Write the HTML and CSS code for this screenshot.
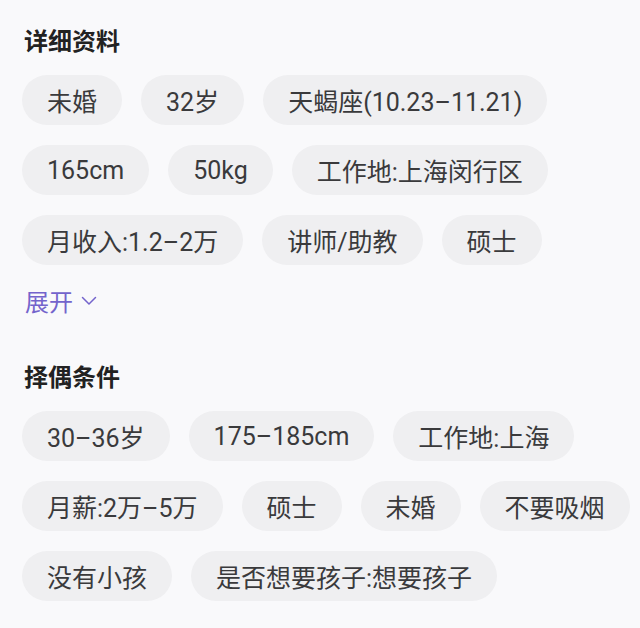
FILE: index.html
```html
<!DOCTYPE html>
<html lang="zh-CN">
<head>
  <meta charset="UTF-8" />
  <meta name="viewport" content="width=device-width, initial-scale=1" />
  <title>详细资料</title>
  <link rel="stylesheet" href="styles.css">
</head>
<body>

  <div class="page">
    <!-- 基本信息 -->
    <div class="section">
      <h2 class="section-title">详细资料</h2>
      <div class="tags">
        <span class="tag">未婚</span>
        <span class="tag">32岁</span>
        <span class="tag">天蝎座(10.23–11.21)</span>
        <span class="tag">165cm</span>
        <span class="tag">50kg</span>
        <span class="tag">工作地:上海闵行区</span>
        <span class="tag">月收入:1.2–2万</span>
        <span class="tag">讲师/助教</span>
        <span class="tag">硕士</span>
      </div>
      <div class="expand">
        展开
        <svg class="chevron" width="16" height="10" viewBox="0 0 16 10">
          <path d="M1.5 1.5 L8 8 L14.5 1.5" fill="none" stroke="currentColor" stroke-width="1.5" stroke-linecap="round" stroke-linejoin="round"/>
        </svg>
      </div>
    </div>

    <!-- 择偶条件 -->
    <div class="section section-match">
      <h2 class="section-title">择偶条件</h2>
      <div class="tags">
        <span class="tag">30–36岁</span>
        <span class="tag">175–185cm</span>
        <span class="tag">工作地:上海</span>
        <span class="tag">月薪:2万–5万</span>
        <span class="tag">硕士</span>
        <span class="tag">未婚</span>
        <span class="tag">不要吸烟</span>
        <span class="tag">没有小孩</span>
        <span class="tag">是否想要孩子:想要孩子</span>
      </div>
    </div>
  </div>

</body>
</html>
```

FILE: styles.css
```css
* {
  box-sizing: border-box;
  margin: 0;
  padding: 0;
}

body {
  font-family: Roboto, "Noto Sans CJK SC", sans-serif;
  background: #f9f9fb;
  color: #3a3a3c;
}

.page {
  padding: 25px 0 0 22px;
}

.section-title {
  font-size: 24px;
  line-height: 34px;
  font-weight: bold;
  color: #222;
  margin-left: 2px;
  margin-bottom: 16px;
}

.tags {
  display: flex;
  flex-wrap: wrap;
  gap: 20px 19px;
  max-width: 616px;
}

.tag {
  display: inline-flex;
  align-items: center;
  height: 50px;
  padding: 0 25px;
  border-radius: 25px;
  background: #efeff1;
  font-size: 25px;
  color: #3a3a3c;
  white-space: nowrap;
}

.expand {
  display: flex;
  align-items: center;
  gap: 8px;
  margin-top: 20px;
  margin-left: 3px;
  height: 30px;
  font-size: 24px;
  color: #7464cc;
}

.chevron {
  margin-top: 1px;
}

.section-match {
  margin-top: 46px;
}
```
